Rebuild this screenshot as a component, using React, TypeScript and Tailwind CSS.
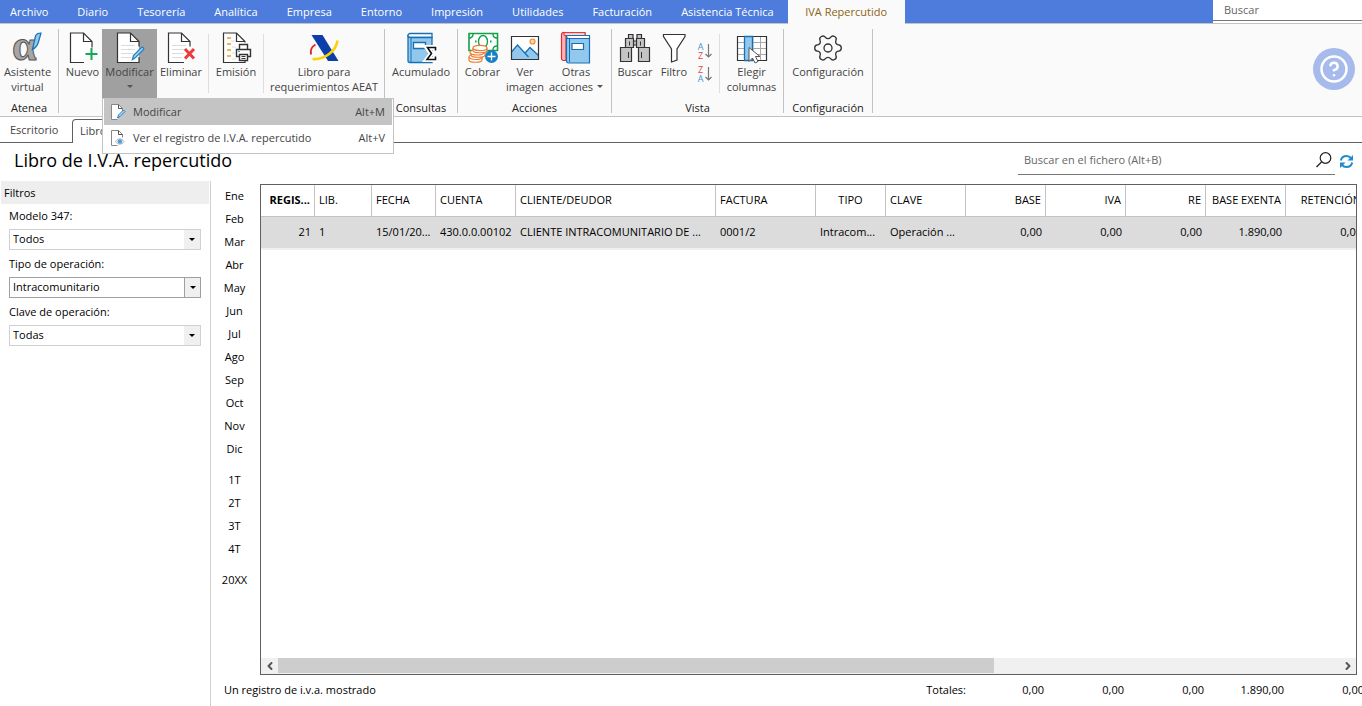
import React, { useState } from 'react';
import { ChevronLeft, ChevronRight, CircleQuestionMark, Settings } from 'lucide-react';

const menuItems = [
  'Archivo',
  'Diario',
  'Tesorería',
  'Analítica',
  'Empresa',
  'Entorno',
  'Impresión',
  'Utilidades',
  'Facturación',
  'Asistencia Técnica',
];

const months = ['Ene', 'Feb', 'Mar', 'Abr', 'May', 'Jun', 'Jul', 'Ago', 'Sep', 'Oct', 'Nov', 'Dic'];
const quarters = ['1T', '2T', '3T', '4T'];

const columns = [
  { label: 'REGIS...', value: '21', width: 'w-[54px]', head: 'text-right font-bold', cell: 'text-right' },
  { label: 'LIB.', value: '1', width: 'w-[57px]', head: 'text-left font-normal', cell: 'text-left' },
  { label: 'FECHA', value: '15/01/20...', width: 'w-[64px]', head: 'text-left font-normal', cell: 'text-left' },
  { label: 'CUENTA', value: '430.0.0.00102', width: 'w-[80px]', head: 'text-left font-normal', cell: 'text-left' },
  { label: 'CLIENTE/DEUDOR', value: 'CLIENTE INTRACOMUNITARIO DE ...', width: 'w-[200px]', head: 'text-left font-normal', cell: 'text-left' },
  { label: 'FACTURA', value: '0001/2', width: 'w-[100px]', head: 'text-left font-normal', cell: 'text-left' },
  { label: 'TIPO', value: 'Intracom...', width: 'w-[70px]', head: 'text-center font-normal', cell: 'text-left' },
  { label: 'CLAVE', value: 'Operación ...', width: 'w-[80px]', head: 'text-left font-normal', cell: 'text-left' },
  { label: 'BASE', value: '0,00', width: 'w-[80px]', head: 'text-right font-normal', cell: 'text-right' },
  { label: 'IVA', value: '0,00', width: 'w-[80px]', head: 'text-right font-normal', cell: 'text-right' },
  { label: 'RE', value: '0,00', width: 'w-[80px]', head: 'text-right font-normal', cell: 'text-right' },
  { label: 'BASE EXENTA', value: '1.890,00', width: 'w-[80px]', head: 'text-right font-normal', cell: 'text-right' },
  { label: 'RETENCIÓN', value: '0,00', width: 'w-[80px]', head: 'text-right font-normal', cell: 'text-right' },
];

const totals = ['0,00', '0,00', '0,00', '1.890,00', '0,00'];

const Icon: React.FC<{ children: React.ReactNode }> = ({ children }) => (
  <svg className="size-8 shrink-0 overflow-visible" viewBox="0 0 32 32" fill="none" aria-hidden="true">
    {children}
  </svg>
);

const AssistantIcon = () => (
  <Icon>
    <text x="0" y="28" fontFamily="Liberation Serif, serif" fontWeight="700" fontSize="44" fill="#a6a6a6" stroke="#555" strokeWidth="1">
      α
    </text>
    <path d="M20.500 17.500L23.500 4q1-3 5.500-3L26.500 10q-1.500 5-6 7.500z" fill="#8ec9f0" stroke="#1c6fb0" strokeWidth="1.200" />
  </Icon>
);

const PageLines = () => (
  <path d="M7 13.500h14M7 17.500h14M7 21.500h12M7 25.500h10" stroke="#dcdcdc" />
);

const NewIcon = () => (
  <Icon>
    <path d="M17 30.500H3.500V1H16.500L25 9.500v6" fill="#fff" stroke="#333" strokeWidth="1.200" />
    <path d="M16.500 1v8.500H25" stroke="#333" strokeWidth="1.200" />
    <path d="M24.500 16v12M18.500 22h12" stroke="#18a558" strokeWidth="2" />
  </Icon>
);

const EditIcon = () => (
  <Icon>
    <path d="M25 25v5.500H3.500V1h13L25 9.500v5" fill="#fff" />
    <path d="M25 25v5.500H3.500V1h13L25 9.500v5M16.500 1v8.500H25" stroke="#333" strokeWidth="1.200" />
    <PageLines />
    <path d="M18.500 27.500l1-4 8-8c1-1 3 1 2 2l-8 8z" fill="#a9d6f5" stroke="#2181c4" strokeWidth="1.300" />
  </Icon>
);

const DeleteIcon = () => (
  <Icon>
    <path d="M19 30.500H3.500V1h13L25 9.500v5" fill="#fff" stroke="#333" strokeWidth="1.200" />
    <path d="M16.500 1v8.500H25" stroke="#333" strokeWidth="1.200" />
    <PageLines />
    <path d="M20 17l9 9.500M29 17l-9 9.500" stroke="#ee3a3a" strokeWidth="3" />
  </Icon>
);

const IssueIcon = () => (
  <Icon>
    <path d="M25 29v1.500H3.500V1h13L25 9.500v1" fill="#fff" stroke="#333" strokeWidth="1.200" />
    <path d="M16.500 1v8.500H25" stroke="#333" strokeWidth="1.200" />
    <path d="M7 6h4M7 12h4M7 18h4M7 24h4" stroke="#f09a1a" strokeWidth="1.500" />
    <path d="M11 9h4M12 15h4M12 27h4M12 21h3" stroke="#ddd" />
    <path d="M19.500 17.500v-5h8v5M19.500 24.500h-3v-7h14v7h-3" fill="#fff" stroke="#333" strokeWidth="1.400" />
    <path d="M19.500 22.500h8v6h-8z" fill="#fff" stroke="#333" strokeWidth="1.400" />
    <path d="M21.500 24.500h4M21.500 26.500h4" stroke="#333" />
    <path d="M18 19.500h2" stroke="#3c97d3" />
  </Icon>
);

const TaxAgencyIcon = () => (
  <Icon>
    <path d="M3.500 3h11l16 26H20z" fill="#0b3ea8" />
    <path d="M7.500 12.500C4 14.500 2 18.500 3 22.500" stroke="#e02a2a" strokeWidth="2" />
    <path d="M29.500 8.500C28 19 17 28 4.500 27" stroke="#fbd20a" strokeWidth="2.600" />
  </Icon>
);

const LedgerIcon = () => (
  <Icon>
    <path d="M5 1.500h22v4H5a2 2 0 0 1 0-4z" fill="#fff" stroke="#1870b3" strokeWidth="1.300" />
    <path d="M3 4.500c.5.800 1 1 2 1h22v25H5a2 2 0 0 1-2-2z" fill="#93c8ee" stroke="#1870b3" strokeWidth="1.300" />
    <path d="M8.500 10.500h12v6h-12z" fill="#fff" stroke="#1870b3" strokeWidth="1.300" />
    <path d="M6 6v24" stroke="#1870b3" />
    <path d="M30.500 19v-3.500H22l4.500 6-4.500 6h8.500V24" stroke="#fff" strokeWidth="5" />
    <path d="M30.500 18.500v-3H22.500l4 6-4.500 6h8.500v-3" stroke="#111" strokeWidth="1.600" />
  </Icon>
);

const CollectIcon = () => (
  <Icon>
    <path d="M2 1.500h28.500v17H2z" fill="#fff" stroke="#14a04c" strokeWidth="1.600" />
    <path d="M2 6c3 0 4-1 4-4M30 6c-3 0-4-1-4-4M30 14c-3 0-4 1-4 4" stroke="#14a04c" strokeWidth="1.400" />
    <ellipse cx="16" cy="9.500" rx="4.500" ry="6" stroke="#14a04c" strokeWidth="1.400" />
    <path d="M8 9.500h1.500M23 9.500h1.500" stroke="#14a04c" strokeWidth="2" />
    <g fill="#fff" stroke="#ee7d31" strokeWidth="1.200">
      <path d="M2 25v3c0 3 13 3 13 0v-3" />
      <ellipse cx="8.500" cy="25" rx="6.500" ry="2.500" />
      <path d="M4 20v3c0 3 14 3 14 0v-3" />
      <ellipse cx="10" cy="20.500" rx="7" ry="2.500" />
      <path d="M6 16v2.500c0 3 14 3 14 0V16" />
      <ellipse cx="13" cy="16" rx="7" ry="2.700" />
    </g>
    <circle cx="24.500" cy="24.500" r="6.500" fill="#1780c4" />
    <path d="M24.500 20.500v8M20.500 24.500h8" stroke="#fff" strokeWidth="1.300" />
  </Icon>
);

const ImageIcon = () => (
  <Icon>
    <path d="M2.500 4.500h27v23h-27z" fill="#fff" />
    <path d="M2.500 20l6-7 7.500 8 5-5.500 8.500 8v4h-27z" fill="#93c8ee" />
    <path d="M2.500 20l6-7 11 12M16 21l5-5.500 8.500 8" stroke="#1870b3" strokeWidth="1.300" />
    <circle cx="23.500" cy="9.500" r="2.500" fill="#fbd9a0" stroke="#ee8a31" strokeWidth="1.200" />
    <path d="M2.500 4.500h27v23h-27z" stroke="#333" strokeWidth="1.200" />
  </Icon>
);

const BooksIcon = () => (
  <Icon>
    <path d="M4 .5h21v3H6v25H3.500a2 2 0 0 1-2-2V2.500a2 2 0 0 1 2.500-2z" fill="#f9b5b5" stroke="#dd2f2f" strokeWidth="1.200" />
    <path d="M4 .8h21v2.500H4z" fill="#fff" stroke="#dd2f2f" />
    <path d="M8 3.500h21.500v3H8a1.500 1.500 0 0 1 0-3z" fill="#fff" stroke="#1870b3" strokeWidth="1.200" />
    <path d="M6.500 5.500c.5.800 1 1 2 1h21v24.500h-21a2 2 0 0 1-2-2z" fill="#93c8ee" stroke="#1870b3" strokeWidth="1.200" />
    <path d="M9.500 7v23" stroke="#1870b3" />
    <path d="M12 11.500h11.500v6H12z" fill="#fff" stroke="#1870b3" strokeWidth="1.200" />
  </Icon>
);

const BinocularsIcon = () => (
  <Icon>
    <g fill="#c4c4c4" stroke="#333" strokeWidth="1.200">
      <path d="M9.500 2.500h4.500v4H9.500zM18 2.500h4.500v4H18z" />
      <path d="M14 9h4v4h-4z" />
      <path d="M6.500 6.500h8v9h-8zM17.500 6.500h8v9h-8z" />
      <path d="M1.500 15.500h11v14h-11zM19.500 15.500h11v14h-11z" />
    </g>
    <path d="M10.500 9.500v4M21.500 9.500v4M9.500 20v6M22.500 20v6" stroke="#333" />
  </Icon>
);

const FilterIcon = () => (
  <Icon>
    <path d="M5.500 2.500h21.500v2l-8 12.500v11l-5.500 2V17l-8-12.500z" fill="#fff" stroke="#333" strokeWidth="1.200" />
  </Icon>
);

const ColumnsIcon = () => (
  <Icon>
    <path d="M1.500 4.500h29v24h-29z" fill="#fff" />
    <path d="M2 10.500h28M2 16.500h28M2 22.500h28M17 5v23M24.500 5v23" stroke="#a9a9a9" />
    <path d="M1.500 4.500h29v24h-29z" stroke="#333" strokeWidth="1.200" />
    <path d="M8.500 4.500h8v24h-8z" fill="#93c8ee" stroke="#1870b3" strokeWidth="1.300" />
    <path d="M13 15.500v14l3.500-3.500 2.500 5 3-1.500-2.500-5h4.500z" fill="#fff" stroke="#555" />
  </Icon>
);

type SortIconProps = { top: string; bottom: string; topColor: string; bottomColor: string };

const SortIcon: React.FC<SortIconProps> = ({ top, bottom, topColor, bottomColor }) => (
  <span className="flex items-center gap-px text-[9px] leading-[9px]">
    <span className="flex w-[7px] flex-col text-center">
      <span className={topColor}>{top}</span>
      <span className={bottomColor}>{bottom}</span>
    </span>
    <svg className="h-4 w-[7px]" viewBox="0 0 7 16" fill="none" aria-hidden="true">
      <path d="M3.500 1v13M.5 11l3 3 3-3" stroke="#777" strokeWidth="1.200" />
    </svg>
  </span>
);

const SmallPage: React.FC<{ children: React.ReactNode }> = ({ children }) => (
  <svg className="size-4 shrink-0" viewBox="0 0 16 16" fill="none" aria-hidden="true">
    <path d="M6.500 15.500h-6V.5h7l4 4v3" fill="#fff" stroke="#888" />
    <path d="M7.500.5v4h4" stroke="#555" />
    {children}
  </svg>
);

type RibbonButtonProps = {
  icon: React.ReactNode;
  lines: string[];
  width: string;
  active?: boolean;
  arrow?: boolean;
  onClick?: () => void;
};

const RibbonButton: React.FC<RibbonButtonProps> = ({ icon, lines, width, active, arrow, onClick }) => (
  <button
    type="button"
    onClick={onClick}
    className={`${width} flex h-[69px] shrink-0 flex-col items-center pt-[3px] leading-[15px] whitespace-nowrap ${
      active ? 'bg-[#a0a0a0] text-[#444]' : 'text-[#444] hover:bg-[#e5e5e5]'
    }`}
  >
    {icon}
    <span>{lines[0]}</span>
    <span className="flex min-h-[15px] items-center gap-1">
      {lines[1]}
      {arrow && <span className="border-x-3 border-t-3 border-x-transparent border-t-[#555]" />}
    </span>
  </button>
);

const RibbonGroup: React.FC<{ label: string; width: string; children: React.ReactNode }> = ({ label, width, children }) => (
  <section className={`${width} flex shrink-0 flex-col border-r border-[#c3c3c3]`}>
    <div className="flex">{children}</div>
    <h2 className="pt-0.5 text-center leading-[15px] text-[#222]">{label}</h2>
  </section>
);

const RibbonSeparator = () => <div className="mt-[5px] h-[59px] w-px shrink-0 bg-[#dedede]" />;

const FilterSelect: React.FC<{ id: string; label: string; options: string[]; focused?: boolean }> = ({
  id,
  label,
  options,
  focused,
}) => (
  <div className="flex flex-col gap-1.5">
    <label htmlFor={id} className="leading-[15px]">{label}</label>
    <div className="relative">
      <select
        id={id}
        className={`h-[21px] w-full appearance-none border bg-white pr-5 pl-[3px] outline-none ${
          focused ? 'border-[#a0a0a0]' : 'border-[#d0d0d0]'
        }`}
      >
        {options.map((option) => (
          <option key={option}>{option}</option>
        ))}
      </select>
      <span
        className={`pointer-events-none absolute inset-y-px right-px flex w-4 items-center justify-center bg-[#f0f0f0] ${
          focused ? 'border-l border-[#a0a0a0]' : ''
        }`}
      >
        <span className="border-x-3 border-t-3 border-x-transparent border-t-black" />
      </span>
    </div>
  </div>
);

const App: React.FC = () => {
  const [menuOpen, setMenuOpen] = useState<boolean>(true);

  return (
    <div className="flex min-h-screen flex-col overflow-x-hidden bg-white font-['Open_Sans','Noto_Sans',sans-serif] text-[11px] text-black">
      {/* Main menu */}
      <header className="flex h-6 border-b border-[#c3c3c3] bg-[#4d7cdc]">
        <nav className="flex gap-[29px] pl-2.5 text-white">
          {menuItems.map((item) => (
            <a key={item} href="#" className="leading-6 whitespace-nowrap">
              {item}
            </a>
          ))}
        </nav>
        <a href="#" className="ml-3.5 h-6 w-[117px] shrink-0 bg-[#fafafa] text-center leading-6 text-[#8a6414]">
          IVA Repercutido
        </a>
        <div className="ml-auto w-[149px] shrink-0 bg-white">
          <input
            type="text"
            aria-label="Buscar"
            placeholder="Buscar"
            className="block h-[21px] w-full border-b border-[#777] pb-0.5 pl-[11px] outline-none placeholder:text-[#666]"
          />
        </div>
      </header>

      {/* Ribbon */}
      <div className="flex h-[93px] border-b border-[#c3c3c3] bg-[#fafafa] pt-[5px] pb-[3px]">
        <RibbonGroup label="Atenea" width="w-[59px]">
          <RibbonButton icon={<AssistantIcon />} lines={['Asistente', 'virtual']} width="w-[55px]" />
        </RibbonGroup>

        <section className="flex w-[326px] shrink-0 border-r border-[#c3c3c3]">
          <RibbonButton icon={<NewIcon />} lines={['Nuevo']} width="ml-1 w-[39px]" />
          <div className="relative self-start">
            <RibbonButton
              icon={<EditIcon />}
              lines={['Modificar']}
              width="w-[55px]"
              active={menuOpen}
              arrow
              onClick={() => setMenuOpen(!menuOpen)}
            />
            {menuOpen && (
              <div
                role="menu"
                className="absolute top-full left-0 z-10 w-[292px] border border-[#c3c3c3] bg-white px-px pb-0.5 text-[#444]"
              >
                <button type="button" role="menuitem" className="flex h-[26px] w-full items-center bg-[#c4c4c4] px-[7px]">
                  <SmallPage>
                    <path d="M6.500 14l1-3 5-5 1.500 1.500-5 5z" fill="#a9d6f5" stroke="#2181c4" />
                  </SmallPage>
                  <span className="ml-1.5">Modificar</span>
                  <span className="ml-auto">Alt+M</span>
                </button>
                <button type="button" role="menuitem" className="flex h-[26px] w-full items-center px-[7px]">
                  <SmallPage>
                    <path d="M4.500 11.500c2.500-3.500 6-3.500 8.500 0-2.500 3.500-6 3.500-8.500 0z" fill="#fff" stroke="#aaa" />
                    <circle cx="8.800" cy="11.500" r="2.300" fill="#4f9fd8" />
                  </SmallPage>
                  <span className="ml-1.5">Ver el registro de I.V.A. repercutido</span>
                  <span className="ml-auto">Alt+V</span>
                </button>
              </div>
            )}
          </div>
          <RibbonButton icon={<DeleteIcon />} lines={['Eliminar']} width="mr-[3px] w-[48px]" />
          <RibbonSeparator />
          <RibbonButton icon={<IssueIcon />} lines={['Emisión']} width="w-[54px]" />
          <RibbonSeparator />
          <RibbonButton icon={<TaxAgencyIcon />} lines={['Libro para', 'requerimientos AEAT']} width="w-[120px]" />
        </section>

        <RibbonGroup label="Consultas" width="w-[73px]">
          <RibbonButton icon={<LedgerIcon />} lines={['Acumulado']} width="w-[72px]" />
        </RibbonGroup>

        <RibbonGroup label="Acciones" width="w-[154px]">
          <RibbonButton icon={<CollectIcon />} lines={['Cobrar']} width="w-[49px]" />
          <RibbonButton icon={<ImageIcon />} lines={['Ver', 'imagen']} width="w-[36px]" />
          <RibbonButton icon={<BooksIcon />} lines={['Otras', 'acciones']} width="w-[66px]" arrow />
        </RibbonGroup>

        <RibbonGroup label="Vista" width="w-[172px]">
          <RibbonButton icon={<BinocularsIcon />} lines={['Buscar']} width="w-[46px]" />
          <RibbonButton icon={<FilterIcon />} lines={['Filtro']} width="w-[32px]" />
          <div className="flex w-[29px] flex-col items-center gap-[5px] pt-[13px]">
            <button type="button" aria-label="Orden ascendente">
              <SortIcon top="A" bottom="Z" topColor="text-[#3c97d3]" bottomColor="text-[#e04848]" />
            </button>
            <button type="button" aria-label="Orden descendente">
              <SortIcon top="Z" bottom="A" topColor="text-[#e04848]" bottomColor="text-[#3c97d3]" />
            </button>
          </div>
          <RibbonSeparator />
          <RibbonButton icon={<ColumnsIcon />} lines={['Elegir', 'columnas']} width="w-[63px]" />
        </RibbonGroup>

        <RibbonGroup label="Configuración" width="w-[89px]">
          <RibbonButton
            icon={<Settings className="size-8 rotate-90 text-[#333]" strokeWidth={1} />}
            lines={['Configuración']}
            width="w-[88px]"
          />
        </RibbonGroup>

        <button
          type="button"
          aria-label="Ayuda"
          className="mr-[7px] mb-1 ml-auto flex size-[42px] shrink-0 items-center justify-center self-center rounded-full bg-[#a6bbec] text-white"
        >
          <CircleQuestionMark className="size-[30px]" strokeWidth={2} />
        </button>
      </div>

      {/* Open windows */}
      <nav className="flex h-[26px] text-[#444]">
        <a href="#" className="w-[72px] border-b border-[#606060] pl-2.5 leading-[26px]">
          Escritorio
        </a>
        <a href="#" className="mt-0.5 w-[160px] rounded-tl-sm border-t border-r border-l border-[#606060] pl-[7px] leading-[22px]">
          Libro
        </a>
        <div className="flex-1 border-b border-[#606060]" />
      </nav>

      {/* Title and search */}
      <div className="flex h-[38px] items-start justify-between pr-2 pl-3.5">
        <h1 className="text-[18px] leading-[34px]">Libro de I.V.A. repercutido</h1>
        <div className="flex h-8">
          <div className="flex w-[317px] items-center border-b border-[#777] pt-[3px]">
            <input
              type="text"
              aria-label="Buscar en el fichero"
              placeholder="Buscar en el fichero (Alt+B)"
              className="min-w-0 flex-1 pl-1.5 outline-none placeholder:text-[#666]"
            />
            <svg className="mr-[3px] size-4" viewBox="0 0 16 16" fill="none" aria-hidden="true">
              <circle cx="9.500" cy="6" r="5.300" stroke="#222" strokeWidth="1.200" />
              <path d="M5.500 10L.5 15" stroke="#222" strokeWidth="1.200" />
            </svg>
          </div>
          <button type="button" aria-label="Actualizar" className="flex items-center pt-1 pl-1">
            <svg className="size-[15px]" viewBox="0 0 15 15" fill="none" aria-hidden="true">
              <path d="M1.800 6.500C2.500 3.500 5 2 7.500 2c2 0 3.500.8 4.500 2.200M13.200 8.500c-.7 3-3.200 4.500-5.700 4.500-2 0-3.500-.8-4.500-2.200" stroke="#2089cf" strokeWidth="2" />
              <path d="M14 1v5.500H8.500zM1 14V8.500h5.500z" fill="#2089cf" />
            </svg>
          </button>
        </div>
      </div>

      <div className="flex flex-1">
        {/* Filters */}
        <aside className="w-[211px] shrink-0 border-r border-[#d0d0d0]">
          <h2 className="mr-px ml-px bg-[#eee] pl-[3px] leading-[23px]">Filtros</h2>
          <div className="flex flex-col gap-1.5 px-[9px] pt-1">
            <FilterSelect id="modelo" label="Modelo 347:" options={['Todos']} />
            <FilterSelect id="tipo" label="Tipo de operación:" options={['Intracomunitario']} focused />
            <FilterSelect id="clave" label="Clave de operación:" options={['Todas']} />
          </div>
        </aside>

        <main className="flex min-w-0 flex-1 flex-col overflow-hidden pt-[3px]">
          <div className="flex flex-1">
            {/* Period shortcuts */}
            <div className="flex w-[49px] shrink-0 flex-col gap-2 pr-0.5 text-center leading-[23px]">
              <div className="flex flex-col">
                {months.map((month) => (
                  <button key={month} type="button">{month}</button>
                ))}
              </div>
              <div className="flex flex-col">
                {quarters.map((quarter) => (
                  <button key={quarter} type="button">{quarter}</button>
                ))}
              </div>
              <button type="button">20XX</button>
            </div>

            {/* Records */}
            <div className="mr-[5px] flex min-w-0 flex-1 flex-col border border-[#606060]">
              <div className="flex-1 overflow-hidden">
                <table className="w-[1105px] table-fixed border-separate border-spacing-0 whitespace-nowrap">
                  <thead>
                    <tr>
                      {columns.map((column) => (
                        <th
                          key={column.label}
                          scope="col"
                          className={`${column.width} ${column.head} h-8 border-r border-b border-[#c3c3c3] pr-1 pl-1`}
                        >
                          {column.label}
                        </th>
                      ))}
                    </tr>
                  </thead>
                  <tbody>
                    <tr className="bg-[#dcdcdc]">
                      {columns.map((column) => (
                        <td key={column.label} className={`${column.cell} h-[33px] border-b-2 border-[#f0f0f0] pr-1 pl-1`}>
                          {column.value}
                        </td>
                      ))}
                    </tr>
                  </tbody>
                </table>
              </div>
              <div className="flex h-4 items-center bg-[#f0f0f0] text-[#555]">
                <button type="button" aria-label="Desplazar a la izquierda" className="flex w-[17px] justify-center">
                  <ChevronLeft className="size-3" strokeWidth={4} />
                </button>
                <div className="h-[15px] flex-1 self-start">
                  <div className="h-full w-[67.500%] bg-[#cdcdcd]" />
                </div>
                <button type="button" aria-label="Desplazar a la derecha" className="flex w-[17px] justify-center">
                  <ChevronRight className="size-3" strokeWidth={4} />
                </button>
              </div>
            </div>
          </div>

          {/* Status and totals */}
          <footer className="flex h-[31px] items-center whitespace-nowrap">
            <div className="flex w-[755px] shrink-0 justify-between pl-[13px]">
              <span>Un registro de i.v.a. mostrado</span>
              <span>Totales:</span>
            </div>
            {totals.map((total, index) => (
              <span key={index} className="w-20 shrink-0 pr-0.5 text-right">
                {total}
              </span>
            ))}
          </footer>
        </main>
      </div>
    </div>
  );
};

export default App;
